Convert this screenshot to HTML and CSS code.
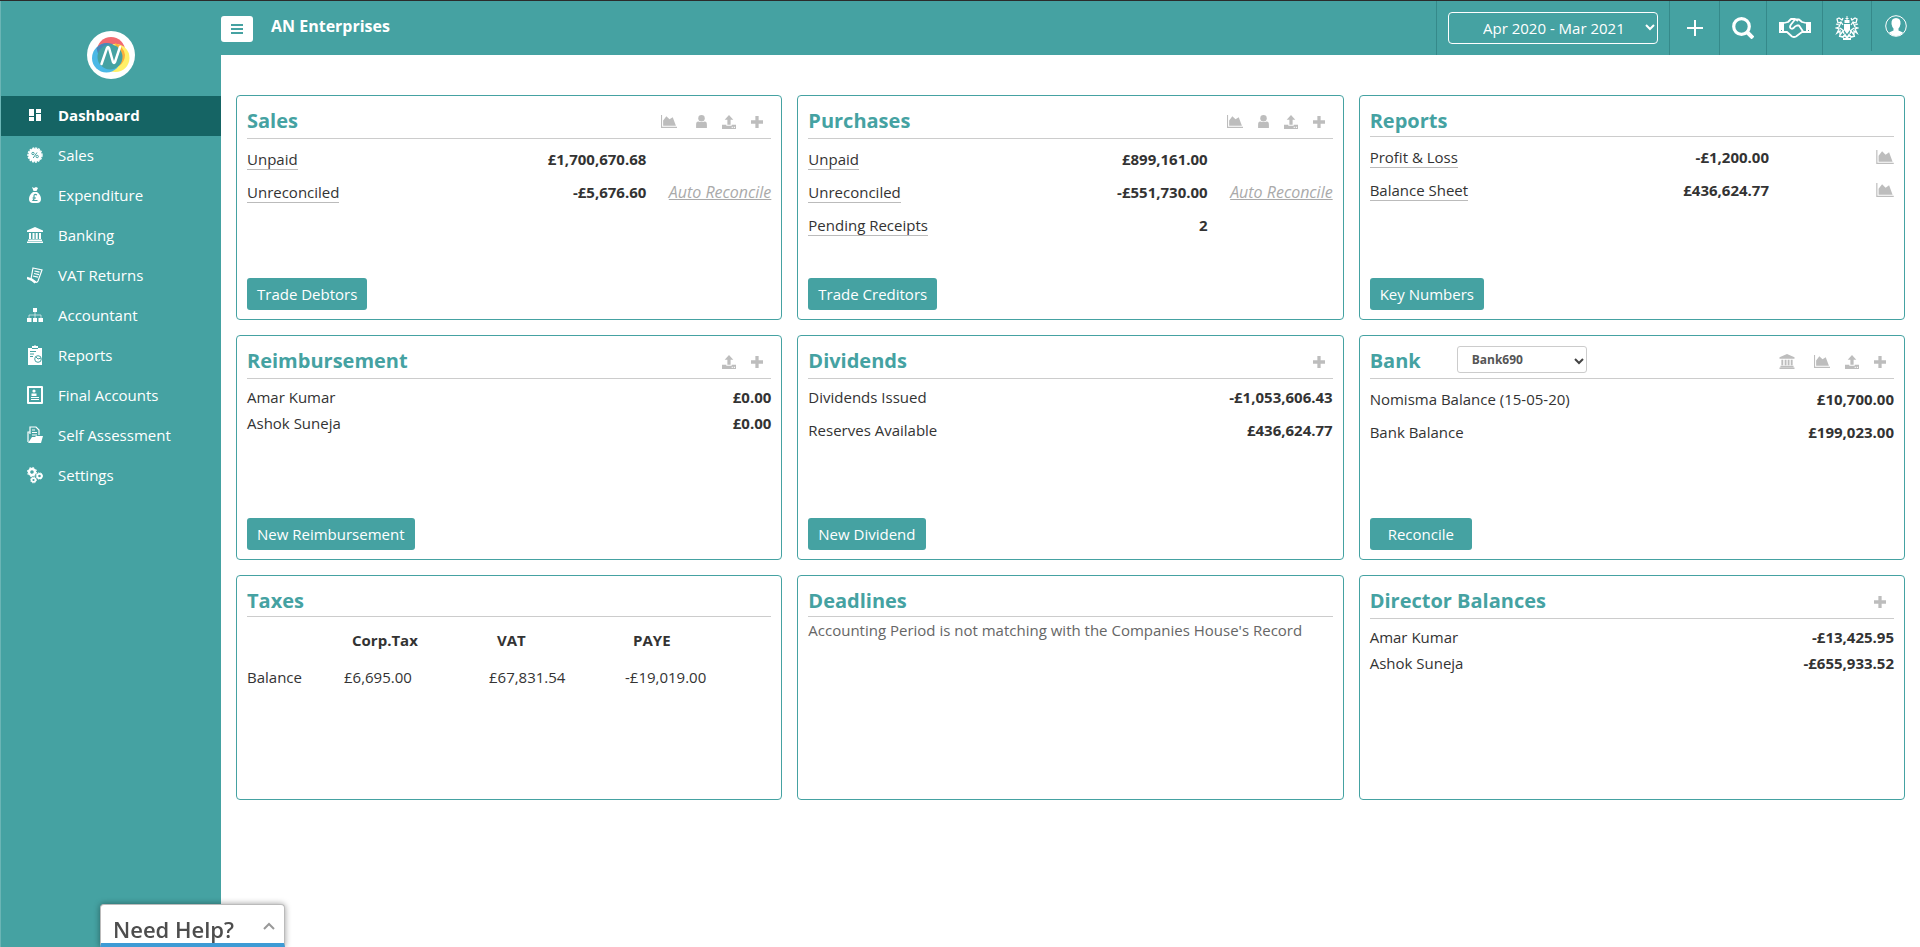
FILE: index.html
```html
<!DOCTYPE html>
<html lang="en">
<head>
<meta charset="utf-8">
<title>AN Enterprises - Dashboard</title>
<link rel="stylesheet" href="styles.css">
</head>
<body>
<svg class="defs" aria-hidden="true">
  <symbol id="chart" viewBox="0 0 15 12"><path d="M0 0h1v11h14v1H0z"/><path d="M2 10V5l3-4 3 3 3-2 3 8z"/></symbol>
  <symbol id="person" viewBox="0 0 10 12"><circle cx="5" cy="3" r="3"/><path d="M0 12V9q0-3 2-3 3 1 6 0 2 0 2 3v3z"/></symbol>
  <symbol id="upload" viewBox="0 0 13 13"><path d="M6.500 0 10.500 4.500H8V9H5V4.500H2.500z"/><path fill-rule="evenodd" d="M0 9h4v1h5V9h4v4H0zM9 11h1v1H9zM11 11h1v1h-1z"/></symbol>
  <symbol id="plus" viewBox="0 0 11 11"><path d="M4 0h3v4h4v3H7v4H4V7H0V4h4z"/></symbol>
  <symbol id="bank" viewBox="0 0 16 16"><path d="M8 0l8 3.500V5H0V3.500zM2 6h2v6H2zM5.500 6h2v6h-2zM8.700 6h2v6h-2zM12 6h2v6h-2zM1 12.500h14V14H1zM0 14.500h16V16H0z"/></symbol>
</svg>
<div class="app">
  <aside class="sidebar">
    <a class="logo" href="#" aria-label="Home">
      <svg viewBox="0 0 48 48" width="48" height="48"><circle cx="24" cy="24" r="24" fill="#fff"/><circle cx="24" cy="20" r="14" fill="#f26a70"/><circle cx="28.500" cy="27" r="14" fill="#fff068"/><path d="M28 12a15 15 0 0 1 10 12q0 7-6 11z" fill="#fbb03b"/><circle cx="19.500" cy="27" r="14.500" fill="#4bb8e6"/><path d="M9.500 17q6-7 16-4L29 37q-16-2-19.500-20z" fill="#4b86b8"/><circle cx="23" cy="26" r="12.500" fill="#45a2a2"/><path d="M14.500 33 20 17q1-2 2 0l4 14q1 2 2 0l5-15" fill="none" stroke="#fff" stroke-width="2.500" stroke-linecap="round"/></svg>
    </a>
    <nav class="menu">
      <a class="item active" href="#"><svg class="mi" viewBox="0 0 16 18"><path d="M2 3h5v7H2zM9 3h5v4H9zM2 11h5v4H2zM9 8h5v7H9z"/></svg>Dashboard</a>
      <a class="item" href="#"><svg class="mi" viewBox="0 0 16 18"><circle cx="8" cy="9" r="6.800"/><circle cx="8" cy="9" r="7" fill="none" stroke="#fff" stroke-width="1.400" stroke-dasharray="2 1"/><g fill="none" stroke="#45a2a2"><circle cx="6" cy="7.500" r="1.200"/><circle cx="10.200" cy="10.500" r="1.200"/><path d="M10 6.500 6.200 12"/></g></svg>Sales</a>
      <a class="item" href="#"><svg class="mi" viewBox="0 0 16 18"><path d="M5 1l2 1 2-1 2 1-1.500 3h-3zM6 6h4q4 3 4 7 0 4-4 4H6q-4 0-4-4 0-4 4-7z"/><path d="M10 9q-3-1.500-3 1v3L6 14.500h4.500M5.500 12h3.500" fill="none" stroke="#45a2a2" stroke-width="1.200"/></svg>Expenditure</a>
      <a class="item" href="#"><svg class="mi" viewBox="0 0 16 16"><use href="#bank"/></svg>Banking</a>
      <a class="item" href="#"><svg class="mi" viewBox="0 0 16 18"><g fill="none" stroke="#fff"><path d="M6 2l9 2-4 11q-1 2-3 1l-4-3zM7.500 5l5 1.200M7 7.500l5 1.200M6 10l5 1.200" stroke-width="1.200"/><path d="M0 12q5 1 8.500 4.500" stroke-width="2.500"/></g></svg>VAT Returns</a>
      <a class="item" href="#"><svg class="mi" viewBox="0 0 16 18"><path d="M6 2h4v4H6zM0 12h4.500v4H0zM6 12h4v4H6zM11.500 12H16v4h-4.500z"/><path d="M8 6v6M2 12V9h12v3" fill="none" stroke="#fff" opacity=".6"/></svg>Accountant</a>
      <a class="item" href="#"><svg class="mi tall" viewBox="0 0 16 20"><path d="M1 3h4V1h2l1-1 1 1h2v2h4v17H1z"/><path d="M5 3.500h6M3 6.500h6M3 9h4M3 11.500h3" stroke="#45a2a2"/><circle cx="11" cy="14" r="3.300" fill="#fff" stroke="#45a2a2"/><path d="M9 12l2 2 3-1" fill="none" stroke="#45a2a2"/></svg>Reports</a>
      <a class="item" href="#"><svg class="mi tall" viewBox="0 0 16 20"><path fill-rule="evenodd" d="M1 1h14q1 0 1 1v16q0 1-1 1H1q-1 0-1-1V2q0-1 1-1zM2 3v14h12V3z"/><circle cx="7" cy="6" r="1.600"/><path d="M4.500 11V8.500h5V11zM4 12h8v1H4zM4 14h8v1H4z"/></svg>Final Accounts</a>
      <a class="item" href="#"><svg class="mi" viewBox="0 0 16 18"><path d="M3 8V1h6l3 3v5M1 16V6h2M5 4h3M5 6.500h5M5 9h5" fill="none" stroke="#fff" stroke-width="1.200"/><path d="M1 17l4-6h3l1-1h7l-2 7z"/></svg>Self Assessment</a>
      <a class="item" href="#"><svg class="mi" viewBox="0 0 16 18"><g fill="none" stroke="#fff"><circle cx="5" cy="6" r="3" stroke-width="2.400"/><circle cx="5" cy="6" r="4.600" stroke-dasharray="1.800 1.800"/><circle cx="12.500" cy="10" r="2.200" stroke-width="1.800"/><circle cx="12.500" cy="10" r="3.200" stroke-dasharray="1.400 1.200"/><circle cx="6.500" cy="14" r="1.900" stroke-width="1.600"/><circle cx="6.500" cy="14" r="2.900" stroke-dasharray="1.200 1.100"/></g></svg>Settings</a>
    </nav>
  </aside>
  <div class="page">
    <header class="topbar">
      <button class="burger" aria-label="Toggle menu"><svg width="12" height="10" viewBox="0 0 12 10"><path d="M0 0h12v2H0zM0 4h12v2H0zM0 8h12v2H0z"/></svg></button>
      <h1 class="company">AN Enterprises</h1>
      <div class="tools">
        <div class="tool period"><div class="picker"><select class="years" aria-label="Accounting period"><option>Apr 2020 - Mar 2021</option></select><svg class="caret" viewBox="0 0 10 7"><path d="M1 1l4 4 4-4"/></svg></div></div>
        <button class="tool t-plus" aria-label="Add"><svg width="16" height="16" viewBox="0 0 16 16"><path d="M7 0h2v7h7v2H9v7H7V9H0V7h7z"/></svg></button>
        <button class="tool t-search" aria-label="Search"><svg width="22" height="22" viewBox="0 0 22 22" fill="none" stroke="#fff"><circle cx="9.500" cy="9.500" r="7.800" fill="none" stroke-width="3.200"/><path d="M15 15l6 6" stroke-width="4"/></svg></button>
        <button class="tool t-deal" aria-label="Partners"><svg width="32" height="20" viewBox="0 0 32 20"><path d="M0 4h5v11H0zM27 4h5v11h-5z"/><path d="M2 12h1v1H2zM29 12h1v1h-1z" fill="#45a2a2"/><g fill="none" stroke="#fff" stroke-width="1.800" stroke-linejoin="round"><path d="M5 5l4-1 3-3h4l3 2M5 14h3l5 4.500q2 1 4 0l6-4.500h4M27 5l-4-1-3-2.500h-4l-4 5q-2 3 0 4 2 1 4-2l2-1h2l4 6"/></g></svg></button>
        <button class="tool t-gov" aria-label="HMRC"><svg width="24" height="24" viewBox="0 0 24 24"><path d="M11.500 0h1v2h1v1h-1v1h2v3h-5V4h2V3h-1V2h1zM9 8h6v6l-3 4-3-4z"/><g fill="none" stroke="#fff" stroke-width="1.300"><path d="M8 9 6 6 3 7 2 3l2-1 3 2 1-2M6 6l-2 5-3 1 3 1-2 4 3-2v4l3-4 1 3M4 9 1 8M5 12l4 3M16 9l2-3 3 1 1-4-2-1-3 2-1-2M18 6l2 5 3 1-3 1 2 4-3-2v4l-3-4-1 3M20 9l3-1M19 12l-4 3"/><path d="M4 20l4 1 2-2 2 3 2-3 2 2 4-1M8 23h8" stroke-width="1.800"/></g></svg></button>
        <button class="tool t-user" aria-label="Account"><svg width="22" height="22" viewBox="0 0 22 22"><circle cx="11" cy="11" r="10.300" fill="none" stroke="#fff"/><path d="M11 3q5 0 4.500 6-.5 3-2 4.500v2l4.500 2q-3 3.500-7 3.500t-7-3.500l4.500-2v-2Q7 12 6.500 9 6 3 11 3z"/></svg></button>
      </div>
    </header>
    <main class="board">
      <section class="card">
        <div class="head"><h2>Sales</h2><div class="acts"><a class="first" href="#" aria-label="Chart"><svg class="ic"><use href="#chart"/></svg></a><a href="#" aria-label="Customers"><svg class="ic s"><use href="#person"/></svg></a><a href="#" aria-label="Upload"><svg class="ic u"><use href="#upload"/></svg></a><a href="#" aria-label="Add"><svg class="ic p"><use href="#plus"/></svg></a></div></div>
        <div class="rows">
          <div class="row"><a class="lbl" href="#">Unpaid</a><b>£1,700,670.68</b><span class="side"></span></div>
          <div class="row"><a class="lbl" href="#">Unreconciled</a><b>-£5,676.60</b><a class="side auto" href="#">Auto Reconcile</a></div>
        </div>
        <button class="btn">Trade Debtors</button>
      </section>
      <section class="card">
        <div class="head"><h2>Purchases</h2><div class="acts"><a href="#" aria-label="Chart"><svg class="ic"><use href="#chart"/></svg></a><a href="#" aria-label="Suppliers"><svg class="ic s"><use href="#person"/></svg></a><a href="#" aria-label="Upload"><svg class="ic u"><use href="#upload"/></svg></a><a href="#" aria-label="Add"><svg class="ic p"><use href="#plus"/></svg></a></div></div>
        <div class="rows">
          <div class="row"><a class="lbl" href="#">Unpaid</a><b>£899,161.00</b><span class="side"></span></div>
          <div class="row"><a class="lbl" href="#">Unreconciled</a><b>-£551,730.00</b><a class="side auto" href="#">Auto Reconcile</a></div>
          <div class="row"><a class="lbl" href="#">Pending Receipts</a><b>2</b><span class="side"></span></div>
        </div>
        <button class="btn">Trade Creditors</button>
      </section>
      <section class="card">
        <div class="head plain"><h2>Reports</h2></div>
        <div class="rows">
          <div class="row"><a class="lbl" href="#">Profit &amp; Loss</a><b>-£1,200.00</b><a class="side" href="#" aria-label="Chart"><svg class="ic big"><use href="#chart"/></svg></a></div>
          <div class="row"><a class="lbl" href="#">Balance Sheet</a><b>£436,624.77</b><a class="side" href="#" aria-label="Chart"><svg class="ic big"><use href="#chart"/></svg></a></div>
        </div>
        <button class="btn">Key Numbers</button>
      </section>
      <section class="card">
        <div class="head"><h2>Reimbursement</h2><div class="acts"><a href="#" aria-label="Upload"><svg class="ic u"><use href="#upload"/></svg></a><a href="#" aria-label="Add"><svg class="ic p"><use href="#plus"/></svg></a></div></div>
        <div class="rows high tight">
          <div class="row"><span>Amar Kumar</span><b>£0.00</b></div>
          <div class="row"><span>Ashok Suneja</span><b>£0.00</b></div>
        </div>
        <button class="btn">New Reimbursement</button>
      </section>
      <section class="card">
        <div class="head"><h2>Dividends</h2><div class="acts"><a href="#" aria-label="Add"><svg class="ic p"><use href="#plus"/></svg></a></div></div>
        <div class="rows high">
          <div class="row"><span>Dividends Issued</span><b>-£1,053,606.43</b></div>
          <div class="row"><span>Reserves Available</span><b>£436,624.77</b></div>
        </div>
        <button class="btn">New Dividend</button>
      </section>
      <section class="card">
        <div class="head"><h2>Bank</h2><div class="picker bank"><select class="banks" aria-label="Bank account"><option>Bank690</option></select><svg class="caret dark" viewBox="0 0 10 7"><path d="M1 1l4 4 4-4"/></svg></div><div class="acts"><a class="first" href="#" aria-label="Bank"><svg class="ic b"><use href="#bank"/></svg></a><a href="#" aria-label="Chart"><svg class="ic"><use href="#chart"/></svg></a><a href="#" aria-label="Upload"><svg class="ic u"><use href="#upload"/></svg></a><a href="#" aria-label="Add"><svg class="ic p"><use href="#plus"/></svg></a></div></div>
        <div class="rows">
          <div class="row"><span>Nomisma Balance (15-05-20)</span><b>£10,700.00</b></div>
          <div class="row"><span>Bank Balance</span><b>£199,023.00</b></div>
        </div>
        <button class="btn roomy">Reconcile</button>
      </section>
      <section class="card">
        <div class="head plain"><h2>Taxes</h2></div>
        <table class="taxes">
          <thead><tr><td></td><th scope="col">Corp.Tax</th><th scope="col">VAT</th><th scope="col">PAYE</th></tr></thead>
          <tbody><tr><td>Balance</td><td>£6,695.00</td><td>£67,831.54</td><td>-£19,019.00</td></tr></tbody>
        </table>
      </section>
      <section class="card">
        <div class="head plain"><h2>Deadlines</h2></div>
        <p class="note">Accounting Period is not matching with the Companies House's Record</p>
      </section>
      <section class="card">
        <div class="head"><h2>Director Balances</h2><div class="acts"><a href="#" aria-label="Add"><svg class="ic p"><use href="#plus"/></svg></a></div></div>
        <div class="rows high tight">
          <div class="row"><span>Amar Kumar</span><b>-£13,425.95</b></div>
          <div class="row"><span>Ashok Suneja</span><b>-£655,933.52</b></div>
        </div>
      </section>
    </main>
  </div>
</div>
<button class="help">Need Help?<svg width="12" height="8" viewBox="0 0 12 8"><path d="M1 7l5-5 5 5"/></svg></button>
</body>
</html>
```
FILE: styles.css
```css
* { box-sizing: border-box; }
body { margin: 0; font: 15px/20px "Open Sans", "Noto Sans", sans-serif; color: #333; background: #fff; }
a { color: inherit; text-decoration: none; }
button, select { font: inherit; margin: 0; }
h1, h2, p { margin: 0; }
.defs { display: none; }
.app { display: flex; min-height: 100vh; border-top: 1px solid #2b2b2b; }
.sidebar { flex: none; width: 221px; background: #45a2a2; color: #fff; border-left: 1px solid #6bb5b5; }
.logo { display: flex; justify-content: center; padding: 30px 0 17px; }
.logo svg { display: block; }
.menu { display: flex; flex-direction: column; }
.item { display: flex; align-items: center; gap: 15px; height: 40px; padding: 0 0 2px 26px; }
.active { background: #156464; font-weight: 700; }
.mi { width: 16px; height: 18px; fill: #fff; }
.tall { height: 20px; }
.page { flex: 1; min-width: 0; }
.topbar { display: flex; height: 54px; background: #45a2a2; color: #fff; }
.burger { width: 32px; height: 26px; margin-top: 15px; padding: 0; border: 0; border-radius: 3px; background: #fff; fill: #45a2a2; display: grid; place-items: center; }
.company { margin: 15px 0 0 18px; font-size: 16px; line-height: 20px; font-weight: 700; }
.tools { display: flex; margin-left: auto; }
.tool { display: flex; align-items: center; justify-content: center; padding: 0; border: 0; border-left: 1px solid #35898a; background: none; fill: #fff; }
.period { width: 233px; }
.t-plus { width: 50px; }
.t-search { width: 47px; }
.t-deal { width: 56px; }
.t-gov { width: 49px; }
.t-user { width: 49px; height: 50px; }
.picker { position: relative; }
.picker select { display: block; appearance: none; }
.years { width: 210px; height: 32px; padding: 0 34px; text-align: right; border: 1px solid #fff; border-radius: 4px; background: none; color: #fff; }
.caret { position: absolute; right: 3px; top: 50%; width: 10px; height: 7px; margin-top: -4px; fill: none; stroke: #fff; stroke-width: 2; pointer-events: none; }
.dark { stroke: #444; }
.board { display: grid; grid-template-columns: repeat(3, 1fr); gap: 15px; padding: 40px 15px; }
.card { display: flex; flex-direction: column; align-items: flex-start; min-width: 0; min-height: 225px; padding: 10px 10px 9px; border: 1px solid #45a2a2; border-radius: 4px; }
.head { display: flex; align-self: stretch; height: 33px; border-bottom: 1px solid #ccc; }
.plain { height: 31px; }
h2 { padding-top: 1px; font-size: 20px; line-height: 28px; font-weight: 700; color: #45a2a2; }
.acts { display: flex; align-items: center; gap: 15px; margin-left: auto; padding: 0 8px 1px 0; }
.acts a { display: flex; }
.acts .first { margin-right: 4px; }
.ic { width: 16px; height: 13px; fill: #bdbdbd; display: block; }
.s { width: 11px; }
.u { width: 14px; height: 14px; }
.p { width: 12px; height: 12px; }
.b { width: 16px; height: 15px; }
.big { width: 18px; height: 14px; margin: 3px 0 0 auto; }
.bank { margin-left: 36px; }
.banks { width: 130px; height: 27px; padding: 0 14px; border: 1px solid #ccc; border-radius: 3px; background: #fff; font-size: 12px; font-weight: 700; color: #555; }
.rows { display: flex; flex-direction: column; align-self: stretch; padding-top: 10px; gap: 12px; }
.high { padding-top: 8px; }
.tight { gap: 5px; }
.row { display: flex; justify-content: space-between; height: 21px; }
.row b { margin-left: auto; }
.lbl { border-bottom: 1px solid #bbb; }
.side { width: 125px; }
.auto { text-align: right; font-size: 16px; font-style: italic; text-decoration: underline; color: #aaa; }
.btn { height: 32px; margin-top: auto; padding: 0 10px; border: 0; border-radius: 3px; background: #45a2a2; color: #fff; }
.roomy { padding: 0 18px; }
.taxes { border-spacing: 0; margin-top: 13px; }
.taxes th, .taxes td { padding: 0; text-align: left; line-height: 20px; width: 136px; }
.taxes th { padding-left: 8px; }
.taxes tbody td { padding-top: 17px; }
.taxes td:first-child { width: 97px; }
.taxes th:nth-child(2), .taxes td:nth-child(2) { width: 145px; }
.note { padding-top: 3px; color: #666; }
.help { position: fixed; left: 100px; bottom: 0; display: flex; justify-content: space-between; width: 185px; height: 43px; padding: 7px 9px 0 12px; border: 1px solid #bbb; border-bottom: 4px solid #3d9bd5; border-radius: 4px 4px 0 0; background: #fff; font-size: 22px; line-height: 34px; font-weight: 600; color: #4d4d4d; box-shadow: 0 0 6px #0006; }
.help svg { margin-top: 10px; fill: none; stroke: #999; stroke-width: 2; }
```
